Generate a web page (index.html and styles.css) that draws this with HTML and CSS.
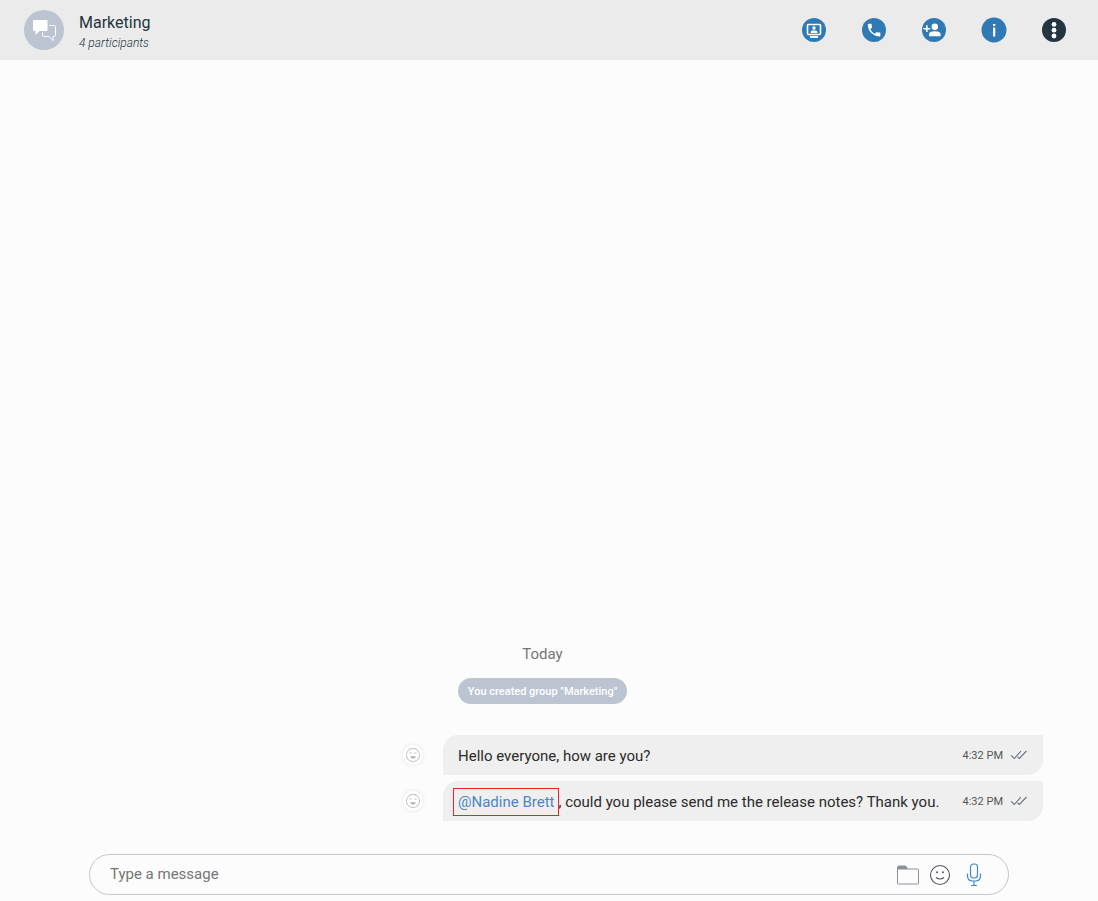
FILE: index.html
```html
<!DOCTYPE html>
<html lang="en">
<head>
<meta charset="utf-8">
<meta name="viewport" content="width=device-width, initial-scale=1">
<title>Marketing</title>
<link rel="stylesheet" href="styles.css">
</head>
<body>
<header class="header">
  <svg class="avatar" viewBox="0 0 40 40" aria-hidden="true">
    <circle cx="20" cy="20" r="20" fill="#bcc4d2"/>
    <path d="M10 10h12.500q1 0 1 1v9q0 1-1 1H15.500l-4 4v-4H10q-1 0-1-1v-9q0-1 1-1z" fill="#fff"/>
    <path d="M25.500 15.500h5q1 0 1 1v9q0 1-1 1h-1.500v4l-4-4h-5.500q-1 0-1-1v-3" fill="none" stroke="#fff"/>
  </svg>
  <div class="group">
    <h1 class="group-name">Marketing</h1>
    <p class="group-info">4 participants</p>
  </div>
  <div class="actions">
    <button class="action" type="button" aria-label="Share screen">
      <svg viewBox="0 0 26 26">
        <circle cx="13" cy="13" r="12" fill="#2f7ab5"/>
        <rect x="6.500" y="7.500" width="13" height="10" rx="1" fill="none" stroke="#fff" stroke-width="1.600"/>
        <circle cx="13" cy="11" r="1.700" fill="#fff"/>
        <path d="M9.700 16v-.8q0-1.900 3.300-1.900t3.300 1.900v.8zM9 19h8v2h-8z" fill="#fff"/>
      </svg>
    </button>
    <button class="action" type="button" aria-label="Call">
      <svg viewBox="0 0 26 26">
        <circle cx="13" cy="13" r="12" fill="#2f7ab5"/>
        <path transform="translate(4.700 4.700) scale(.7)" d="M6.620 10.790c1.440 2.830 3.760 5.140 6.590 6.590l2.200-2.200c.27-.27.67-.36 1.020-.24 1.120.37 2.330.57 3.570.57.550 0 1 .45 1 1V20c0 .55-.45 1-1 1-9.390 0-17-7.610-17-17 0-.55.45-1 1-1h3.500c.55 0 1 .45 1 1 0 1.250.2 2.450.57 3.570.11.350.03.740-.25 1.020z" fill="#fff"/>
      </svg>
    </button>
    <button class="action" type="button" aria-label="Add participants">
      <svg viewBox="0 0 26 26">
        <circle cx="13" cy="13" r="12" fill="#2f7ab5"/>
        <circle cx="13.800" cy="9.700" r="3.200" fill="#fff"/>
        <path d="M8 19.200v-1.700q0-3.200 5.800-3.200t5.800 3.200v1.700zM5 8.300h1.600v2.600h2.600v1.600H6.600v2.600H5v-2.600H2.400v-1.600H5z" fill="#fff"/>
      </svg>
    </button>
    <button class="action" type="button" aria-label="Information">
      <svg viewBox="0 0 26 26">
        <circle cx="13" cy="13" r="12.500" fill="#2f7ab5"/>
        <path d="M12 7h2.300v2H12zM12 10.500h2.300V19.500H12z" fill="#fff"/>
      </svg>
    </button>
    <button class="action" type="button" aria-label="More options">
      <svg viewBox="0 0 26 26">
        <circle cx="13" cy="13" r="12" fill="#233540"/>
        <g fill="#fff"><circle cx="13" cy="7.400" r="2.400"/><circle cx="13" cy="13.200" r="2.400"/><circle cx="13" cy="19" r="2.400"/></g>
      </svg>
    </button>
  </div>
</header>

<svg class="symbols" aria-hidden="true">
  <symbol id="react" viewBox="0 0 16 16">
    <circle cx="8" cy="8" r="6.600" fill="none" stroke="#cacaca" stroke-width="1.100"/>
    <path d="M4.500 6h2M9.500 6h2" stroke="#bbb" stroke-width="1.200"/>
    <path d="M5 9.300h6q-.8 2.400-3 2.400T5 9.300z" fill="#b0b0b0"/>
  </symbol>
  <symbol id="read" viewBox="0 0 18 10">
    <path d="M1 5.300l3.300 3.200L11 1M7.500 6.800l1.800 1.700L16.500 1" fill="none" stroke="#687083" stroke-width="1.100"/>
  </symbol>
</svg>

<main class="messages">
  <div class="date">Today</div>
  <div class="notice">You created group "Marketing"</div>
  <div class="message">
    <button class="react" type="button" aria-label="React"><svg><use href="#react"/></svg></button>
    <div class="bubble">
      <p class="text">Hello everyone, how are you?</p>
      <time class="time">4:32 PM</time>
      <svg class="read" role="img" aria-label="Read"><use href="#read"/></svg>
    </div>
  </div>
  <div class="message">
    <button class="react" type="button" aria-label="React"><svg><use href="#react"/></svg></button>
    <div class="bubble">
      <p class="text"><a class="mention" href="#nadine">@Nadine Brett</a>, could you please send me the release notes? Thank you.</p>
      <time class="time">4:32 PM</time>
      <svg class="read" role="img" aria-label="Read"><use href="#read"/></svg>
    </div>
  </div>
</main>

<form class="composer">
  <input class="input" type="text" placeholder="Type a message" aria-label="Type a message">
  <div class="tools">
    <button class="tool" type="button" aria-label="Attach file">
      <svg viewBox="0 0 24 24">
        <path d="M1.500 7V4.500q0-1.500 1.500-1.500h6q1 0 1.500 1l1 2h10q1 0 1 1v13q0 1-1 1h-19q-1 0-1-1z" fill="none" stroke="#8b909b"/>
        <path d="M1.500 6.500v-2Q1.500 3 3 3h6q1 0 1.500 1l1 2.500z" fill="#8b909b"/>
      </svg>
    </button>
    <button class="tool" type="button" aria-label="Emoji">
      <svg viewBox="0 0 24 24">
        <circle cx="12" cy="12" r="9.500" fill="none" stroke="#555b63" stroke-width="1.100"/>
        <path d="M8 14.500q4 3 8 0" fill="none" stroke="#555b63" stroke-width="1.200"/>
        <circle cx="9" cy="9.200" r="1" fill="#555b63"/><circle cx="15" cy="9.200" r="1" fill="#555b63"/>
      </svg>
    </button>
  </div>
  <button class="tool" type="button" aria-label="Record voice message">
    <svg viewBox="0 0 24 24">
      <g fill="none" stroke="#3f8bca" stroke-width="1.200"><rect x="8.500" y="1" width="7" height="14" rx="3"/><path d="M5.500 10.500V13q0 5 5 5h3q5 0 5-5v-2.500M12 18v4.500M9 22.500h6"/></g>
    </svg>
  </button>
</form>
</body>
</html>
```
FILE: styles.css
```css
* {
  box-sizing: border-box;
}

body {
  display: flex;
  flex-direction: column;
  min-height: 100vh;
  margin: 0;
  background: #fcfcfc;
  color: #2b2b2b;
  font: 15px/20px Roboto, "Liberation Sans", sans-serif;
}

button {
  display: flex;
  padding: 0;
  border: 0;
  background: none;
  cursor: pointer;
}

.header {
  display: flex;
  align-items: center;
  height: 60px;
  padding: 0 31px 0 24px;
  background: #ebebeb;
}

.avatar {
  width: 40px;
  height: 40px;
}

.group {
  flex: 1;
  margin-left: 15px;
  padding-top: 4px;
  color: #233540;
}

.group-name,
.group-info {
  margin: 0;
  font-weight: 400;
}

.group-name {
  font-size: 16px;
  line-height: 22px;
}

.group-info {
  font-size: 12px;
  font-style: italic;
  font-weight: 300;
  line-height: 18px;
}

.actions {
  display: flex;
  gap: 34px;
}

.action svg {
  width: 26px;
  height: 26px;
}

.symbols {
  display: none;
}

.messages {
  display: flex;
  flex: 1;
  flex-direction: column;
  justify-content: flex-end;
  padding: 0 55px 33px 42px;
}

.date {
  color: #757575;
  text-align: center;
}

.notice {
  align-self: center;
  margin: 14px 0 25px;
  padding: 1px 10px 0;
  border-radius: 13px;
  background: #bcc4d2;
  color: #fff;
  font-size: 11px;
  font-weight: 500;
  line-height: 25px;
}

.message {
  display: flex;
  align-items: center;
  justify-content: flex-end;
  gap: 20px;
  margin-top: 6px;
}

.react {
  padding: 2px;
  border-radius: 50%;
  background: #fff;
  box-shadow: 0 0 4px #e4e4e4;
}

.react svg {
  width: 16px;
  height: 16px;
}

.bubble {
  display: flex;
  align-items: center;
  width: 600px;
  min-height: 40px;
  padding: 0 15px;
  border-radius: 15px 0;
  background: #efefef;
}

.text {
  flex: 1;
  margin: 0;
  padding-top: 2px;
}

.mention {
  margin-right: 4px;
  outline: 1px solid #e8232b;
  outline-offset: 4px;
  color: #4a86c8;
  text-decoration: none;
}

.time {
  margin-right: 7px;
  padding-top: 2px;
  color: #555;
  font-size: 11px;
}

.read {
  width: 18px;
  height: 10px;
}

.composer {
  display: flex;
  align-items: center;
  gap: 10px;
  height: 41px;
  margin: 0 89px 6px;
  padding: 0 22px 0 20px;
  border: 1px solid #c6c6c6;
  border-radius: 21px;
}

.input {
  flex: 1;
  min-width: 0;
  padding: 0 0 2px;
  border: 0;
  outline: 0;
  background: none;
  color: #2b2b2b;
  font: inherit;
}

.input::placeholder {
  color: #757575;
}

.tools {
  display: flex;
  gap: 8px;
}

.tool svg {
  width: 24px;
  height: 24px;
}
```
